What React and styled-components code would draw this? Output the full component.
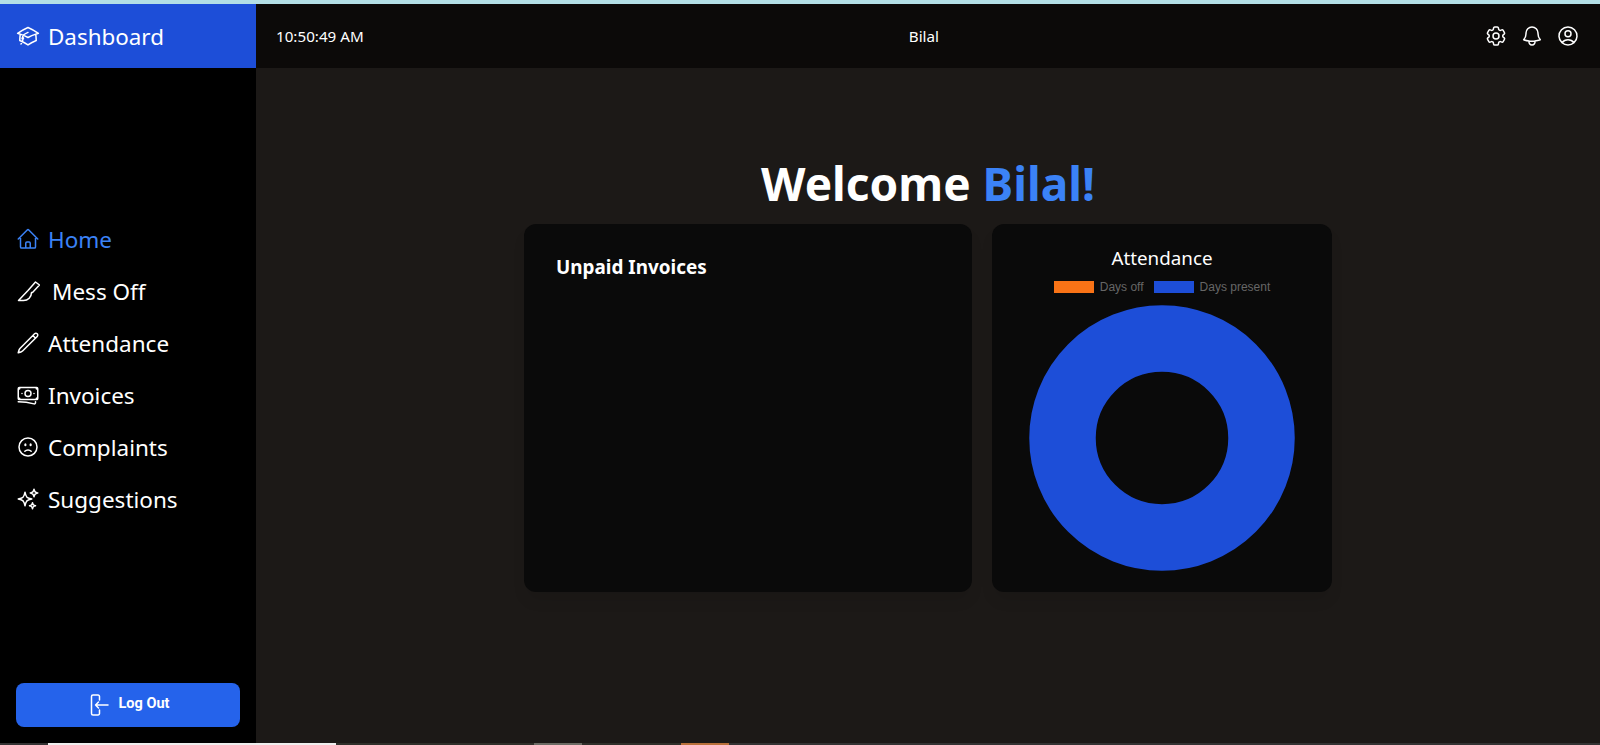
import React from 'react'
import styled, { createGlobalStyle } from 'styled-components'
import {
  HiOutlineAcademicCap,
  HiOutlineHome,
  HiOutlinePencil,
  HiOutlineBanknotes,
  HiOutlineFaceFrown,
  HiOutlineSparkles,
  HiOutlineCog6Tooth,
  HiOutlineBell,
  HiOutlineUserCircle,
} from 'react-icons/hi2'

const GlobalStyle = createGlobalStyle`
* {
  box-sizing: border-box;
}
html, body {
  margin: 0;
  padding: 0;
  background: #1c1917;
  font-family: "Noto Sans", "Open Sans", sans-serif;
  overflow: hidden;
}
`

function KnifeIcon() {
  return (
    <svg width="24" height="24" viewBox="0 0 24 24" fill="none" stroke="currentColor" strokeWidth="1.5" strokeLinejoin="round" strokeLinecap="round">
      <path d="M2.5 21.5 L12 11.5 L19.5 3 L23.5 6 L16.5 13.5 L15.5 13.5 C15.5 18 12 21.5 7.5 21.5 Z" />
    </svg>
  )
}

function LogoutIcon() {
  return (
    <svg width="24" height="24" viewBox="0 0 24 24" fill="none" stroke="currentColor" strokeWidth="1.5" strokeLinejoin="round" strokeLinecap="round">
      <path d="M12.5 7V3.5a1.5 1.5 0 0 0-1.5-1.5H6a1.5 1.5 0 0 0-1.5 1.5v17A1.5 1.5 0 0 0 6 22h5a1.5 1.5 0 0 0 1.5-1.5V17" />
      <path d="M21 12H8.5M11.5 9l-3 3 3 3" />
    </svg>
  )
}

const navItems = [
  { label: 'Home', icon: <HiOutlineHome />, active: true },
  { label: 'Mess Off', icon: <KnifeIcon />, wide: true },
  { label: 'Attendance', icon: <HiOutlinePencil /> },
  { label: 'Invoices', icon: <HiOutlineBanknotes /> },
  { label: 'Complaints', icon: <HiOutlineFaceFrown /> },
  { label: 'Suggestions', icon: <HiOutlineSparkles /> },
]

const taskbar = [
  { w: 48, c: '#333333' },
  { w: 288, c: '#eeeeee' },
  { w: 198, c: '#2f2f2a' },
  { w: 48, c: '#6b6b64' },
  { w: 99, c: '#2f2f2a' },
  { w: 48, c: '#b8703a' },
  { w: 871, c: '#333333' },
]

export default function App() {
  return (
    <>
      <GlobalStyle />
      <Page>
        <TopStripe />
        <Main>
          <Sidebar>
            <Brand>
              <HiOutlineAcademicCap />
              Dashboard
            </Brand>
            <Nav>
              {navItems.map(item => (
                <NavItem key={item.label} $active={item.active} $wide={item.wide}>
                  {item.icon}
                  {item.label}
                </NavItem>
              ))}
            </Nav>
            <SidebarFooter>
              <LogoutButton>
                <LogoutIcon />
                <LogoutLabel>Log Out</LogoutLabel>
              </LogoutButton>
            </SidebarFooter>
          </Sidebar>
          <Right>
            <Header>
              <Clock>10:50:49 AM</Clock>
              <UserName>Bilal</UserName>
              <HeaderIcons>
                <HiOutlineCog6Tooth />
                <HiOutlineBell />
                <HiOutlineUserCircle />
              </HeaderIcons>
            </Header>
            <Content>
              <Welcome>
                Welcome <Accent>Bilal!</Accent>
              </Welcome>
              <Cards>
                <InvoiceCard>
                  <CardTitle>Unpaid Invoices</CardTitle>
                </InvoiceCard>
                <ChartCard>
                  <ChartTitle>Attendance</ChartTitle>
                  <Legend>
                    <LegendItem>
                      <Swatch $color="#f97316" />
                      Days off
                    </LegendItem>
                    <LegendItem>
                      <Swatch $color="#1d4ed8" />
                      Days present
                    </LegendItem>
                  </Legend>
                  <svg width="266" height="266" viewBox="0 0 266 266">
                    <circle cx="133" cy="133" r="99.5" fill="none" stroke="#1d4ed8" strokeWidth="66.5" />
                  </svg>
                </ChartCard>
              </Cards>
            </Content>
          </Right>
        </Main>
        <Taskbar>
          {taskbar.map((s, i) => (
            <TaskbarSegment key={i} $width={s.w} $color={s.c} />
          ))}
        </Taskbar>
      </Page>
    </>
  )
}

const Page = styled.div`
width: 100%;
height: 745px;
display: flex;
flex-direction: column;
`

const TopStripe = styled.div`
height: 4px;
background: #b4dfe6;
`

const Main = styled.div`
flex: 1;
display: flex;
min-height: 0;
`

const Sidebar = styled.aside`
width: 256px;
background: #000000;
color: #ffffff;
display: flex;
flex-direction: column;
`

const Brand = styled.div`
height: 64px;
background: #1d4ed8;
display: flex;
align-items: center;
gap: 8px;
padding-left: 16px;
font-size: 22.4px;
svg {
  width: 24px;
  height: 24px;
}
`

const Nav = styled.nav`
margin-top: 151px;
display: flex;
flex-direction: column;
gap: 12px;
padding-left: 16px;
`

const NavItem = styled.div`
height: 40px;
display: flex;
align-items: center;
gap: ${props => (props.$wide ? '12px' : '8px')};
font-size: 22.5px;
color: ${props => (props.$active ? '#3b82f6' : '#ffffff')};
svg {
  width: 24px;
  height: 24px;
  flex-shrink: 0;
}
`

const SidebarFooter = styled.div`
margin-top: auto;
padding: 16px;
`

const LogoutButton = styled.button`
width: 100%;
height: 44px;
border: none;
border-radius: 8px;
background: #2563eb;
color: #ffffff;
display: flex;
align-items: center;
justify-content: center;
gap: 8px;
font-family: Roboto, sans-serif;
font-size: 14.5px;
font-weight: 700;
`

const LogoutLabel = styled.span`
padding-bottom: 4px;
`

const Right = styled.div`
flex: 1;
display: flex;
flex-direction: column;
background: #1c1917;
`

const Header = styled.header`
height: 64px;
background: #0c0a09;
color: #ffffff;
display: flex;
align-items: center;
justify-content: space-between;
padding: 0 20px;
font-size: 15.2px;
`

const Clock = styled.div``

const UserName = styled.div``

const HeaderIcons = styled.div`
display: flex;
align-items: center;
gap: 12px;
svg {
  width: 24px;
  height: 24px;
}
`

const Content = styled.main`
flex: 1;
display: flex;
flex-direction: column;
align-items: center;
padding-top: 83px;
`

const Welcome = styled.h1`
margin: 0 0 9px;
font-size: 46px;
line-height: 64px;
font-weight: 700;
color: #ffffff;
`

const Accent = styled.span`
color: #3b82f6;
`

const Cards = styled.div`
display: flex;
gap: 20px;
`

const InvoiceCard = styled.section`
width: 448px;
height: 368px;
background: #0a0a0a;
border-radius: 12px;
padding: 29px 32px;
box-shadow: 0 10px 15px -3px rgba(0, 0, 0, 0.1);
`

const CardTitle = styled.h2`
margin: 0;
font-size: 18.9px;
line-height: 28px;
font-weight: 700;
color: #ffffff;
`

const ChartCard = styled.section`
width: 340px;
height: 368px;
background: #0a0a0a;
border-radius: 12px;
padding-top: 20px;
display: flex;
flex-direction: column;
align-items: center;
box-shadow: 0 10px 15px -3px rgba(0, 0, 0, 0.1);
`

const ChartTitle = styled.h3`
margin: 0;
font-size: 18.8px;
line-height: 28px;
font-weight: 400;
color: #ffffff;
`

const Legend = styled.div`
display: flex;
gap: 10px;
height: 12px;
margin: 9px 0 12px;
`

const LegendItem = styled.div`
display: flex;
align-items: center;
gap: 6px;
font-family: "Liberation Sans", Arial, sans-serif;
font-size: 12px;
color: #666666;
`

const Swatch = styled.span`
width: 40px;
height: 12px;
background: ${props => props.$color};
`

const Taskbar = styled.div`
height: 2px;
display: flex;
`

const TaskbarSegment = styled.div`
width: ${props => props.$width}px;
background: ${props => props.$color};
`
